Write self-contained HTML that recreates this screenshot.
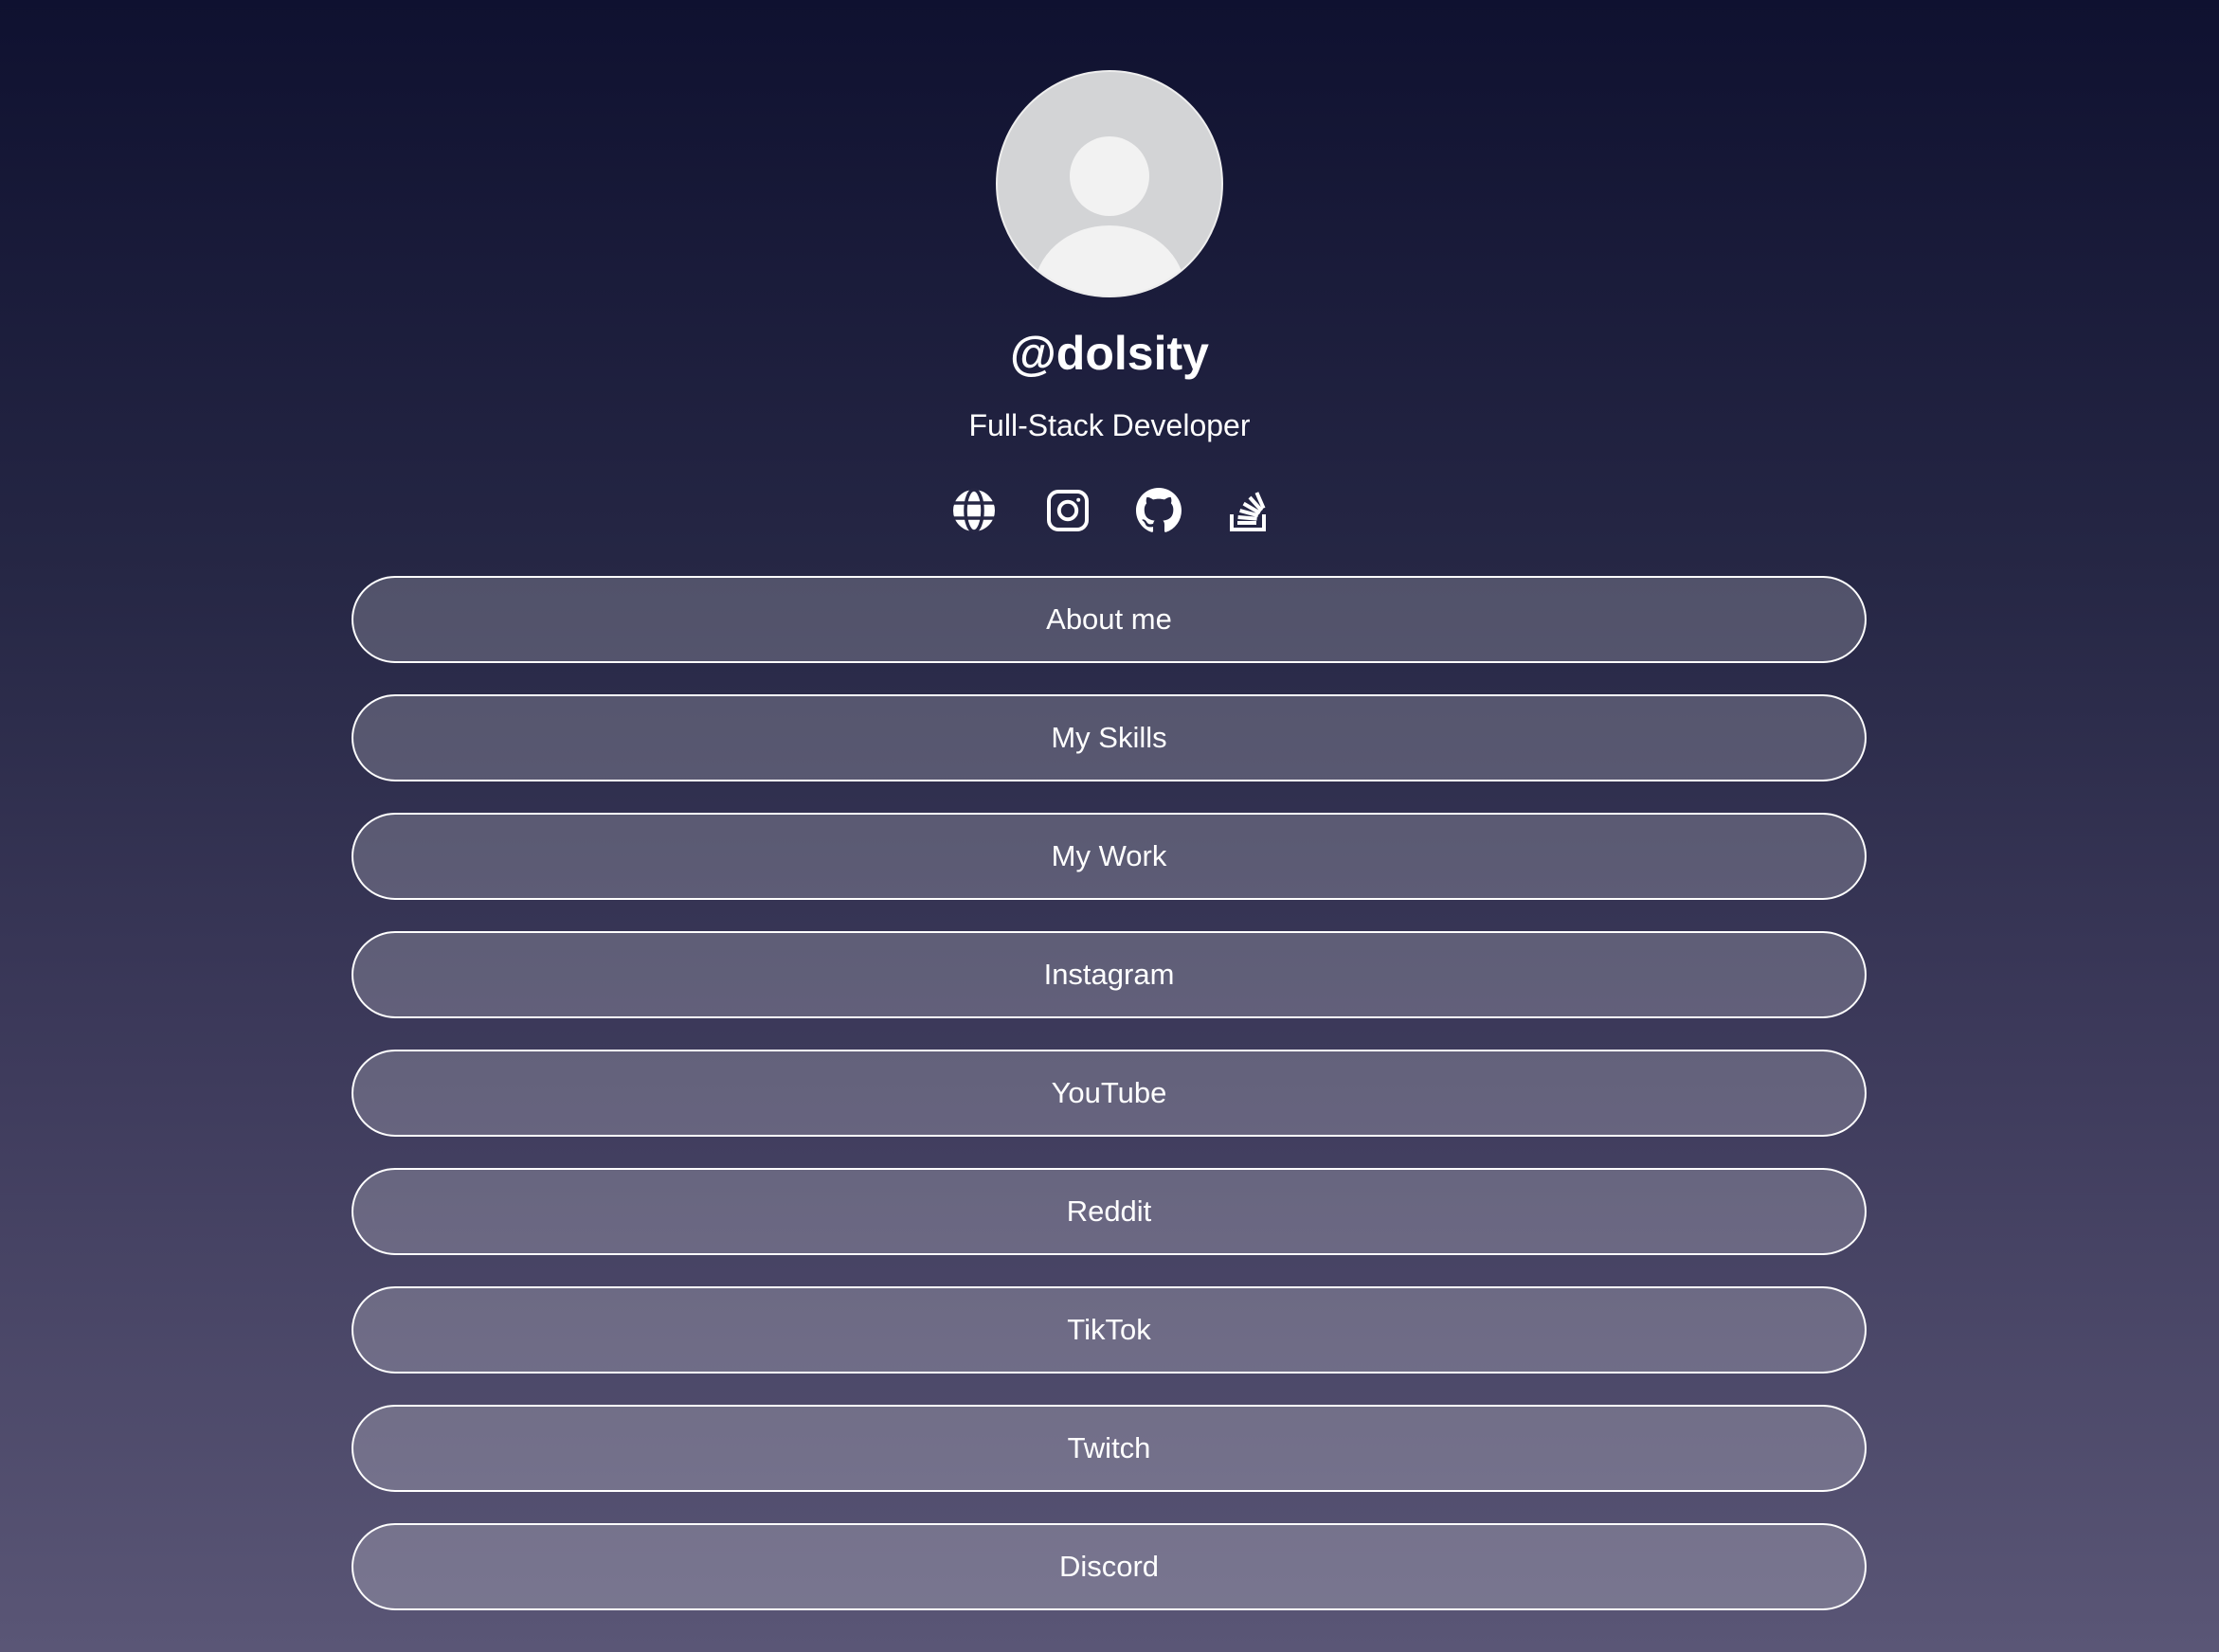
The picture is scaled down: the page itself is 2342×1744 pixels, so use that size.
<!DOCTYPE html>
<html><head><meta charset="utf-8"><style>
html,body{margin:0;padding:0}
body{width:2342px;height:1744px;overflow:hidden;background:linear-gradient(180deg,#0f1130 0%,#262745 35%,#3e3b5c 65%,#5a5676 100%);font-family:"Liberation Sans",Arial,sans-serif;color:#fff;position:relative}
.av{position:absolute;left:1051px;top:74px;width:236px;height:236px;border-radius:50%;border:2px solid #eee;background:#d3d4d6;overflow:hidden}
.av .h{position:absolute;left:76px;top:68px;width:84px;height:84px;border-radius:50%;background:#f2f2f2}
.av .b{position:absolute;left:38px;top:162px;width:160px;height:140px;border-radius:50%;background:#f2f2f2}
h1{position:absolute;top:344px;left:0;width:2342px;text-align:center;margin:0;font-size:50px;font-weight:bold}
.sub{position:absolute;top:431px;left:0;width:2342px;text-align:center;font-size:32px}
.ic{position:absolute;top:515px;width:48px;height:48px}
.btn{position:absolute;left:371px;width:1595px;height:88px;border:2px solid #fff;border-radius:48px;background:rgba(255,255,255,0.2);text-align:center;line-height:88px;font-size:31px}
</style></head><body>
<div class="av"><div class="h"></div><div class="b"></div></div>
<h1>@dolsity</h1>
<div class="sub">Full-Stack Developer</div>
<svg class="ic" style="left:1004px" viewBox="0 0 24 24" fill="#fff"><circle cx="12" cy="12" r="11"/><g stroke="#262745" stroke-width="1.8" fill="none"><ellipse cx="12" cy="12" rx="4.5" ry="11"/><line x1="1" y1="8" x2="23" y2="8"/><line x1="1" y1="16" x2="23" y2="16"/></g></svg>
<svg class="ic" style="left:1103px" viewBox="0 0 24 24" fill="none" stroke="#fff" stroke-width="2"><rect x="2" y="2" width="20" height="20" rx="5"/><circle cx="12" cy="12" r="4.6"/><circle cx="17.6" cy="6.4" r="1" fill="#fff" stroke="none"/></svg>
<svg class="ic" style="left:1199px" viewBox="0 0 16 16" fill="#fff"><path d="M8 0C3.58 0 0 3.58 0 8c0 3.54 2.29 6.530 5.47 7.59.4.07.55-.17.55-.38 0-.19-.01-.82-.01-1.49-2.01.37-2.530-.49-2.69-.94-.09-.23-.48-.94-.82-1.13-.28-.15-.68-.52-.01-.53.63-.01 1.08.58 1.230.82.72 1.21 1.870.87 2.330.66.07-.52.28-.87.51-1.07-1.78-.2-3.64-.89-3.64-3.95 0-.87.31-1.59.82-2.15-.08-.2-.36-1.02.08-2.12 0 0 .67-.21 2.2.82.64-.18 1.32-.27 2-.27.68 0 1.36.09 2 .27 1.53-1.04 2.2-.82 2.2-.82.44 1.1.16 1.92.08 2.12.51.56.82 1.27.82 2.15 0 3.07-1.87 3.75-3.65 3.95.29.25.54.73.54 1.48 0 1.07-.01 1.93-.01 2.2 0 .21.15.46.55.38A8.013 8.013 0 0016 8c0-4.42-3.58-8-8-8z"/></svg>
<svg class="ic" style="left:1294px" viewBox="0 0 24 24" fill="none" stroke="#fff" stroke-width="2"><path d="M3 14v8h17v-8"/><path d="M6 18.5h10M6.3 15.5l10 .8M7.3 12l9.6 2.6M9.3 8.3l8.6 5M12.5 5l6.3 7M16.2 2.5l3.6 8.3"/></svg>
<div class="btn" style="top:608px">About me</div>
<div class="btn" style="top:733px">My Skills</div>
<div class="btn" style="top:858px">My Work</div>
<div class="btn" style="top:983px">Instagram</div>
<div class="btn" style="top:1108px">YouTube</div>
<div class="btn" style="top:1233px">Reddit</div>
<div class="btn" style="top:1358px">TikTok</div>
<div class="btn" style="top:1483px">Twitch</div>
<div class="btn" style="top:1608px">Discord</div>
</body></html>
